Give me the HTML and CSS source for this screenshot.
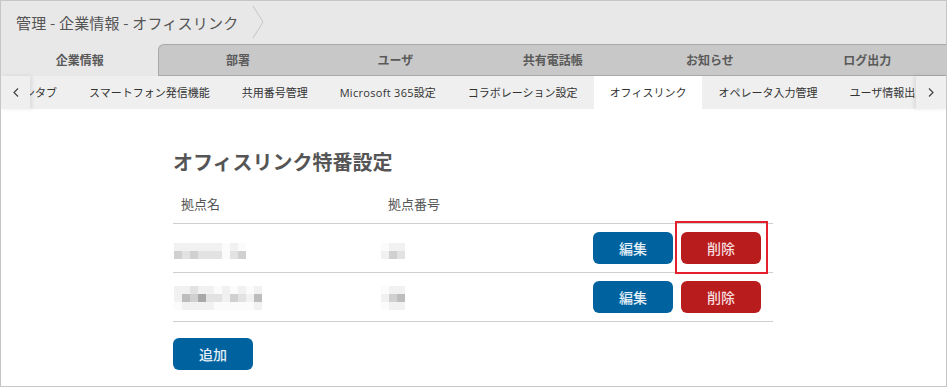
FILE: index.html
```html
<!DOCTYPE html>
<html lang="ja">
<head>
  <meta charset="UTF-8" />
  <title>オフィスリンク</title>
  <link rel="stylesheet" href="styles.css">
</head>
<body>
  <div class="frame">

    <!-- Breadcrumb -->
    <div class="crumb">
      <span>管理 - 企業情報 - オフィスリンク</span>
      <svg width="13" height="36" viewBox="0 0 13 36"><polyline points="1,1 11,17 1,33" fill="none" stroke="#c4c4c4" stroke-width="1"/></svg>
    </div>

    <!-- Main tabs -->
    <ul class="tabs">
      <li class="active">企業情報</li>
      <li>部署</li>
      <li>ユーザ</li>
      <li>共有電話帳</li>
      <li>お知らせ</li>
      <li>ログ出力</li>
    </ul>

    <!-- Sub tabs -->
    <div class="subnav">
      <div class="subnav-arrow prev">
        <svg width="6" height="9" viewBox="0 0 6 9"><polyline points="5,0.5 1,4.5 5,8.5" fill="none" stroke="#444" stroke-width="1.2"/></svg>
      </div>
      <div class="subnav-view">
        <ul class="subnav-list">
          <li>ボタンタブ</li>
          <li>スマートフォン発信機能</li>
          <li>共用番号管理</li>
          <li><span class="latin">Microsoft 365</span>設定</li>
          <li>コラボレーション設定</li>
          <li class="current">オフィスリンク</li>
          <li>オペレータ入力管理</li>
          <li>ユーザ情報出力</li>
        </ul>
      </div>
      <div class="subnav-arrow next">
        <svg width="6" height="9" viewBox="0 0 6 9"><polyline points="1,0.5 5,4.5 1,8.5" fill="none" stroke="#444" stroke-width="1.2"/></svg>
      </div>
    </div>

    <!-- Content -->
    <div class="content">
      <div class="panel">
        <h2>オフィスリンク特番設定</h2>

        <div class="list">
          <div class="row head">
            <div class="cell">拠点名</div>
            <div class="cell">拠点番号</div>
            <div class="cell"></div>
          </div>

          <div class="row">
            <div class="cell">
              <span class="mosaic">
                <span class="line"><i class="s1"></i><i class="s1"></i><i class="s1"></i><i class="s1"></i><i class="s1"></i><i class="s1"></i><i class="s0"></i><i class="s1"></i><i class="s0"></i></span>
                <span class="line"><i class="s3"></i><i class="s2"></i><i class="s3"></i><i class="s2"></i><i class="s2"></i><i class="s2"></i><i class="s0"></i><i class="s2"></i><i class="s3"></i></span>
              </span>
            </div>
            <div class="cell">
              <span class="mosaic">
                <span class="line"><i class="s0"></i><i class="s1"></i><i class="s1"></i></span>
                <span class="line"><i class="s1"></i><i class="s3"></i><i class="s2"></i></span>
              </span>
            </div>
            <div class="cell actions">
              <button class="btn btn-blue">編集</button>
              <span class="highlight"><button class="btn btn-red">削除</button></span>
            </div>
          </div>

          <div class="row">
            <div class="cell">
              <span class="mosaic">
                <span class="line"><i class="s1"></i><i class="s1"></i><i class="s2"></i><i class="s1"></i><i class="s1"></i><i class="s0"></i><i class="s1"></i><i class="s0"></i><i class="s1"></i><i class="s0"></i><i class="s1"></i></span>
                <span class="line"><i class="s1"></i><i class="s4"></i><i class="s3"></i><i class="s5"></i><i class="s2"></i><i class="s2"></i><i class="s1"></i><i class="s3"></i><i class="s2"></i><i class="s1"></i><i class="s4"></i></span>
                <span class="line"><i class="s0"></i><i class="s1"></i><i class="s1"></i><i class="s1"></i><i class="s1"></i><i class="s0"></i><i class="s0"></i><i class="s0"></i><i class="s0"></i><i class="s0"></i><i class="s1"></i></span>
              </span>
            </div>
            <div class="cell">
              <span class="mosaic">
                <span class="line"><i class="s0"></i><i class="s1"></i><i class="s1"></i></span>
                <span class="line"><i class="s1"></i><i class="s3"></i><i class="s4"></i></span>
                <span class="line"><i class="s0"></i><i class="s1"></i><i class="s1"></i></span>
              </span>
            </div>
            <div class="cell actions">
              <button class="btn btn-blue">編集</button>
              <button class="btn btn-red">削除</button>
            </div>
          </div>
        </div>

        <button class="btn btn-blue add">追加</button>
      </div>
    </div>

  </div>
</body>
</html>
```

FILE: styles.css
```css
* {
  margin: 0; padding: 0;
  box-sizing: border-box;
}
body {
  font-family: "Noto Sans CJK JP", "Noto Sans", sans-serif;
  background-color: #fff;
}
.frame {
  width: 947px;
  height: 387px;
  border: 1px solid #c6c6c6;
  overflow: hidden;
  display: flex;
  flex-direction: column;
}

/* breadcrumb */
.crumb {
  height: 43px;
  flex: none;
  background-color: #e8e8e8;
  display: flex;
  align-items: center;
  gap: 14px;
  padding-left: 15px;
  font-size: 15px;
  color: #555;
}
.crumb span {
  letter-spacing: 0.2px;
}
.crumb svg {
  display: block;
}

/* main tabs */
.tabs {
  display: flex;
  flex: none;
  height: 32px;
  list-style: none;
  background-color: #e8e8e8;
}
.tabs li {
  flex: 1;
  text-align: center;
  font-size: 12px;
  font-weight: bold;
  color: #5a5a5a;
  line-height: 30px;
  background-color: #c8c8c8;
  border-top: 1px solid #a9a9a9;
  border-bottom: 1px solid #a9a9a9;
}
.tabs li.active {
  background-color: #e8e8e8;
  border-color: transparent;
}
.tabs li.active + li {
  border-left: 1px solid #a9a9a9;
  border-top-left-radius: 6px;
}

/* sub tabs */
.subnav {
  display: flex;
  flex: none;
  height: 33px;
  background-color: #efefef;
  font-size: 11px;
  color: #333;
}
.subnav-arrow {
  width: 29px;
  flex: none;
  display: flex;
  align-items: center;
  justify-content: center;
  background-color: #efefef;
  position: relative;
  z-index: 1;
}
.subnav-arrow.prev {
  box-shadow: 2px 0 4px rgba(0, 0, 0, 0.09);
}
.subnav-arrow.next {
  width: 30px;
  box-shadow: -2px 0 4px rgba(0, 0, 0, 0.09);
}
.subnav-view {
  flex: 1;
  overflow: hidden;
}
.subnav-list {
  display: flex;
  list-style: none;
  margin-left: -44px;
  white-space: nowrap;
}
.subnav-list li {
  flex: none;
  padding: 0 16px;
  line-height: 33px;
}
.subnav-list li.current {
  background-color: #fff;
}
.subnav-list .latin {
  font-family: "Open Sans", "Noto Sans", sans-serif;
  letter-spacing: 0.3px;
}

/* content */
.content {
  flex: 1;
  padding: 39px 0 0 172px;
}
.panel {
  width: 600px;
}
.panel h2 {
  font-size: 20px;
  font-weight: bold;
  color: #555;
  line-height: 28px;
}
.list {
  margin-top: 8px;
}
.row {
  display: grid;
  grid-template-columns: 207px 1fr auto;
  align-items: center;
  height: 49px;
  border-bottom: 1px solid #cfcfcf;
}
.row.head {
  height: 40px;
  font-size: 13px;
  color: #555;
}
.cell {
  padding-left: 8px;
}
.actions {
  display: flex;
  gap: 8px;
  padding-right: 12px;
}

/* anonymised values */
.mosaic {
  display: inline-flex;
  flex-direction: column;
  margin-left: -7px;
  vertical-align: middle;
}
.mosaic .line {
  display: flex;
}
.mosaic i {
  display: block;
  width: 8px;
  height: 8px;
}
.s0 { background-color: #fbfbfb; }
.s1 { background-color: #f1f1f1; }
.s2 { background-color: #e2e2e2; }
.s3 { background-color: #d0d0d0; }
.s4 { background-color: #bdbdbd; }
.s5 { background-color: #a8a8a8; }

/* buttons */
.btn {
  width: 80px;
  height: 32px;
  border: none;
  border-radius: 6px;
  font-family: inherit;
  font-size: 14px;
  font-weight: 500;
  color: #e4eef7;
  cursor: pointer;
}
.btn-blue {
  background-color: #00639f;
}
.btn-red {
  background-color: #b81c1d;
  color: #f6dede;
}
.add {
  display: block;
  margin-top: 16px;
}
.highlight {
  position: relative;
  display: block;
}
.highlight::after {
  content: "";
  position: absolute;
  left: -6px;
  right: -7px;
  top: -11px;
  bottom: -10px;
  border: 2px solid #e3202b;
}
```
